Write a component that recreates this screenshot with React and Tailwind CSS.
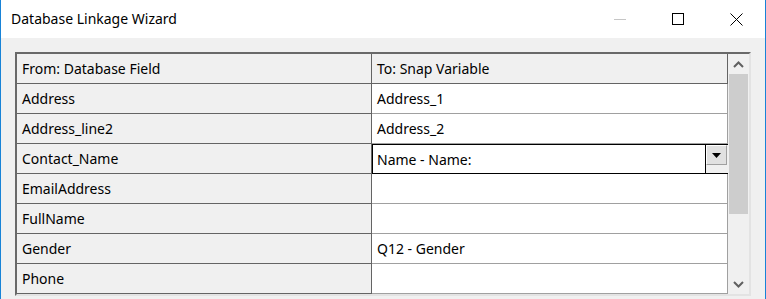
const rows = [
  { from: "Address", to: "Address_1" },
  { from: "Address_line2", to: "Address_2" },
  { from: "Contact_Name", to: "Name - Name:", combo: true },
  { from: "EmailAddress", to: "" },
  { from: "FullName", to: "" },
  { from: "Gender", to: "Q12 - Gender" },
  { from: "Phone", to: "" },
];

const font = { fontFamily: '"Noto Sans", "Open Sans", sans-serif' };

const App = () => {
  return (
    <div
      className="w-[766px] h-[299px] overflow-hidden flex flex-col border-l border-r border-[#1883d7] bg-[#f0f0f0] text-black"
      style={font}
    >
      <div className="h-[38px] shrink-0 bg-white flex items-center justify-between">
        <span className="pl-[10px] text-[14px] pb-[1px]">Database Linkage Wizard</span>
        <div className="flex items-center h-full">
          <div className="w-[58px] h-full flex items-center justify-center">
            <div className="w-[12px] h-[1px] bg-[#c6c6c6]" />
          </div>
          <div className="w-[58px] h-full flex items-center justify-center">
            <div className="w-[12px] h-[12px] border border-black" />
          </div>
          <div className="w-[58px] h-full flex items-center justify-center">
            <svg width="13" height="13" viewBox="0 0 13 13">
              <path d="M0.5 0.5 L12.5 12.5 M12.5 0.5 L0.5 12.5" stroke="#000" strokeWidth="1" />
            </svg>
          </div>
        </div>
      </div>

      <div className="pt-[14px] pl-[14px]">
        <div className="w-[736px] border-t-2 border-l-2 border-[#696969] border-r-2 border-r-[#e3e3e3] border-b-2 border-b-[#e3e3e3] flex">
          <div className="w-[711px]">
            <div className="flex h-[30px] bg-[#f0f0f0] text-[14px]">
              <div className="w-[355px] border-r border-b border-[#646464] flex items-center pl-[5px]">
                From: Database Field
              </div>
              <div className="w-[356px] border-r border-b border-[#646464] flex items-center pl-[5px]">
                To: Snap Variable
              </div>
            </div>
            {rows.map((r, i) => (
              <div key={i} className="flex h-[30px] text-[14px]">
                <div className="w-[355px] border-r border-b border-[#646464] bg-[#f0f0f0] flex items-center pl-[5px]">
                  {r.from}
                </div>
                {r.combo ? (
                  <div className="w-[356px] flex border-b border-black">
                    <div className="w-[334px] border border-b-0 border-black bg-white flex items-center pl-[4px]">
                      {r.to}
                    </div>
                    <div className="w-[22px] border-t border-black">
                      <div className="h-[20px] w-[21px] bg-[#e1e1e1] border-t border-l border-white border-r border-b border-r-[#a0a0a0] border-b-[#a0a0a0] flex items-center justify-center">
                        <svg width="9" height="5" viewBox="0 0 9 5">
                          <path d="M0 0 H9 L4.5 5 Z" fill="#000" />
                        </svg>
                      </div>
                    </div>
                  </div>
                ) : (
                  <div className="w-[356px] border-r border-b border-[#a0a0a0] bg-white flex items-center pl-[5px]">
                    {r.to}
                  </div>
                )}
              </div>
            ))}
          </div>
          <div className="w-[21px] flex flex-col bg-[#f0f0f0]">
            <div className="h-[20px] flex items-center justify-center">
              <svg width="11" height="7" viewBox="0 0 11 7">
                <path d="M1 6 L5.5 1.5 L10 6" stroke="#606060" strokeWidth="2" fill="none" />
              </svg>
            </div>
            <div className="h-[140px] mx-[1px] bg-[#cdcdcd]" />
            <div className="flex-1" />
            <div className="h-[20px] flex items-center justify-center">
              <svg width="11" height="7" viewBox="0 0 11 7">
                <path d="M1 1 L5.5 5.5 L10 1" stroke="#606060" strokeWidth="2" fill="none" />
              </svg>
            </div>
          </div>
        </div>
      </div>
    </div>
  );
};

export default App;
